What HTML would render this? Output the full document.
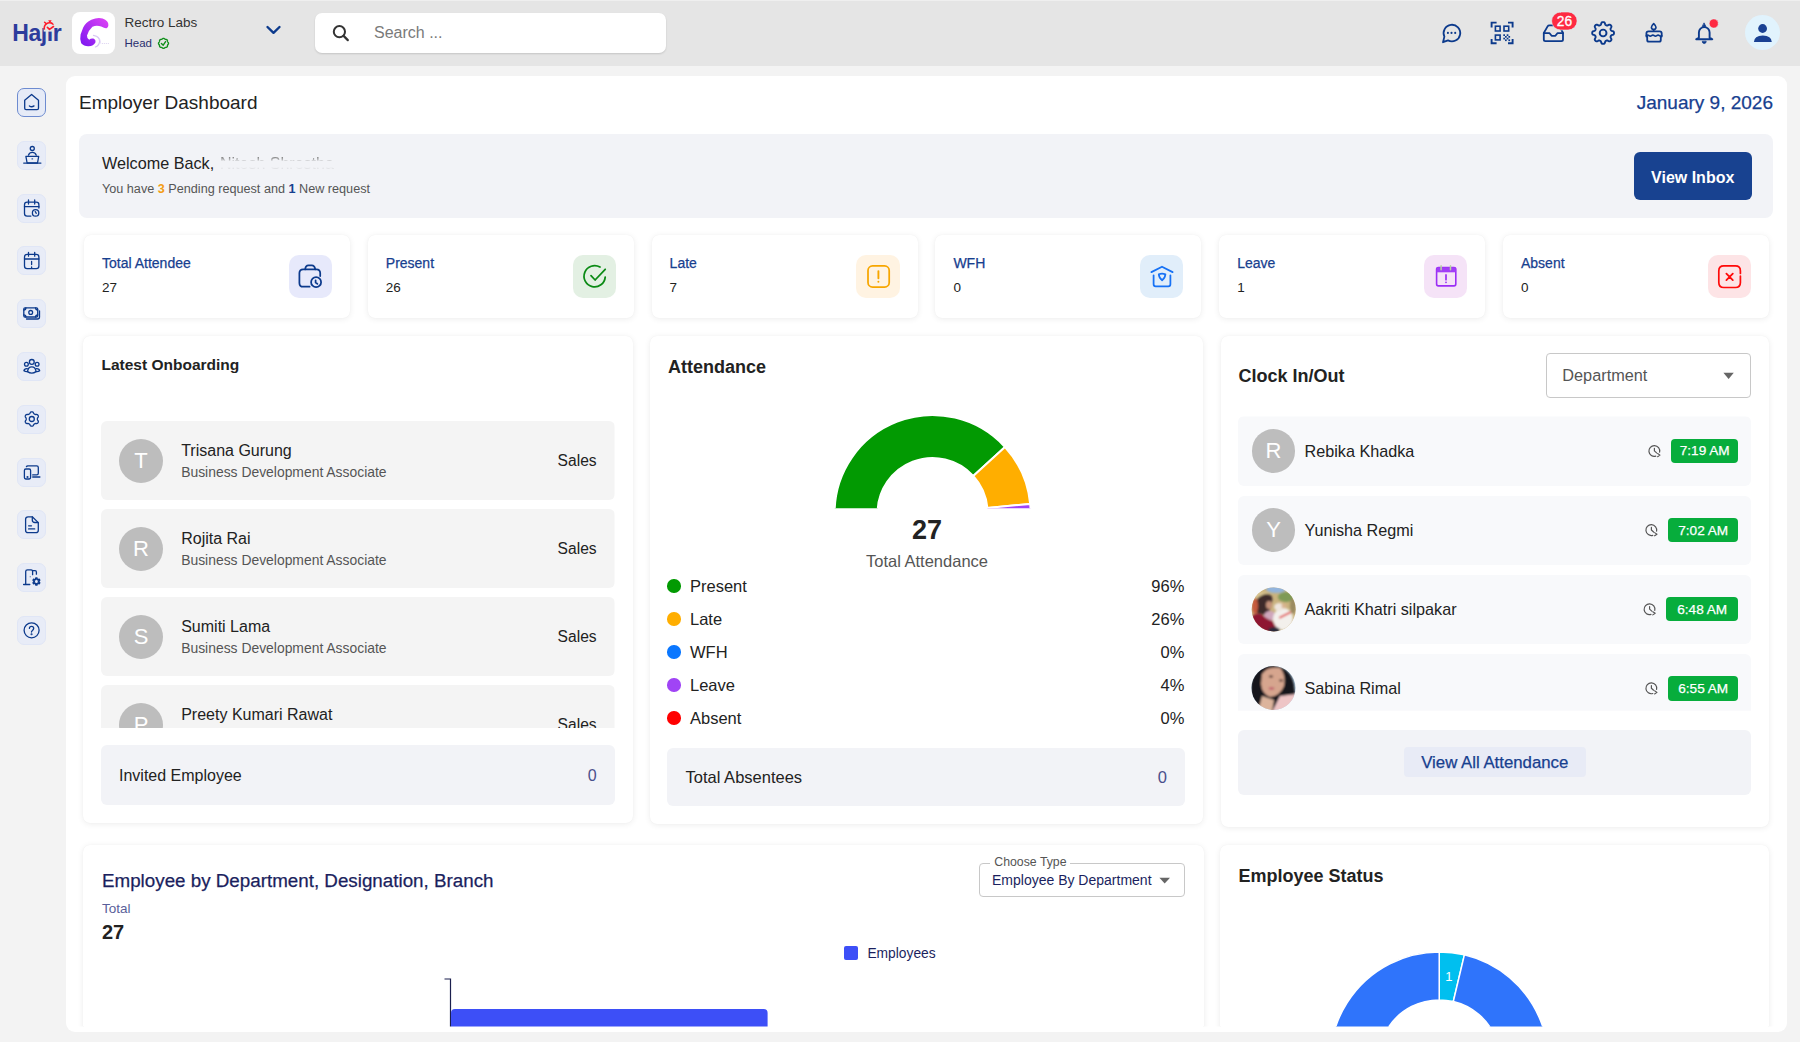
<!DOCTYPE html><html><head><meta charset="utf-8"><style>
*{margin:0;padding:0;box-sizing:border-box}
html,body{width:1800px;height:1042px;overflow:hidden}
body{background:#f3f3f3;font-family:"Liberation Sans",sans-serif;position:relative}
.t{position:absolute;white-space:nowrap}
.b{position:absolute}
svg{position:absolute;overflow:visible}
</style></head><body>
<div class="b" style="left:0px;top:0px;width:1800px;height:66px;background:#e5e5e5;border-radius:0px;"></div>
<div class="b" style="left:0px;top:0px;width:1800px;height:1px;background:#efefef;border-radius:0px;"></div>
<div class="t" style="top:19.83px;font-size:23px;line-height:27.6px;color:#2d3c9c;font-weight:700;left:12.2px;letter-spacing:-0.4px;">Ha&#x237;&#x131;r</div>
<div class="b" style="left:72px;top:12px;width:43px;height:42px;background:#fff;border-radius:8px;"></div>
<div class="t" style="top:15.32px;font-size:13.5px;line-height:16.2px;color:#333;font-weight:400;left:124.5px;">Rectro Labs</div>
<div class="t" style="top:36.71px;font-size:11.5px;line-height:13.8px;color:#2a2f6e;font-weight:400;left:124.5px;">Head</div>
<div class="b" style="left:315px;top:13px;width:351px;height:40px;background:#fff;border-radius:7px;box-shadow:0 1px 2px rgba(0,0,0,0.14);"></div>
<div class="t" style="top:23.45px;font-size:16px;line-height:19.2px;color:#7a7a7a;font-weight:400;left:374px;">Search ...</div>
<div class="b" style="left:1745px;top:15.4px;width:35px;height:35px;border-radius:50%;background:#e1f3fd"></div>
<div class="b" style="left:17.1px;top:88.0px;width:29px;height:29px;background:#e6ebf7;border-radius:7px;border:1px solid #6d8bd0;"></div>
<div class="b" style="left:17.1px;top:140.8px;width:29px;height:29px;background:#e8ecf7;border-radius:7px;border:1px solid #e0e6f6;"></div>
<div class="b" style="left:17.1px;top:193.6px;width:29px;height:29px;background:#e8ecf7;border-radius:7px;border:1px solid #e0e6f6;"></div>
<div class="b" style="left:17.1px;top:246.39999999999998px;width:29px;height:29px;background:#e8ecf7;border-radius:7px;border:1px solid #e0e6f6;"></div>
<div class="b" style="left:17.1px;top:299.2px;width:29px;height:29px;background:#e8ecf7;border-radius:7px;border:1px solid #e0e6f6;"></div>
<div class="b" style="left:17.1px;top:352.0px;width:29px;height:29px;background:#e8ecf7;border-radius:7px;border:1px solid #e0e6f6;"></div>
<div class="b" style="left:17.1px;top:404.79999999999995px;width:29px;height:29px;background:#e8ecf7;border-radius:7px;border:1px solid #e0e6f6;"></div>
<div class="b" style="left:17.1px;top:457.59999999999997px;width:29px;height:29px;background:#e8ecf7;border-radius:7px;border:1px solid #e0e6f6;"></div>
<div class="b" style="left:17.1px;top:510.4px;width:29px;height:29px;background:#e8ecf7;border-radius:7px;border:1px solid #e0e6f6;"></div>
<div class="b" style="left:17.1px;top:563.2px;width:29px;height:29px;background:#e8ecf7;border-radius:7px;border:1px solid #e0e6f6;"></div>
<div class="b" style="left:17.1px;top:616.0px;width:29px;height:29px;background:#e8ecf7;border-radius:7px;border:1px solid #e0e6f6;"></div>
<div class="b" style="left:66px;top:76px;width:1721.3px;height:955.8px;background:#fff;border-radius:9px;"></div>
<div class="t" style="top:91.91px;font-size:19px;line-height:22.8px;color:#222;font-weight:400;left:79px;">Employer Dashboard</div>
<div class="t" style="top:91.91px;font-size:19px;line-height:22.8px;color:#17408f;font-weight:400;right:27.00px;text-align:right;-webkit-text-stroke:0.25px currentColor;">January 9, 2026</div>
<div class="b" style="left:79px;top:134px;width:1694px;height:84px;background:#f2f3f7;border-radius:8px;"></div>
<div class="t" style="top:153.96px;font-size:16.2px;line-height:19.44px;color:#222;font-weight:400;left:102px;">Welcome Back,</div>
<div class="t" style="top:154.15px;font-size:16px;line-height:19.2px;color:#777;font-weight:400;left:220px;-webkit-mask-image:linear-gradient(180deg,rgba(0,0,0,.9) 3px,rgba(0,0,0,.5) 5.5px,transparent 7.5px,transparent 13px,rgba(0,0,0,.12) 14.5px,transparent 16px);filter:blur(0.4px);">Nitesh Shrestha</div>
<div class="t" style="top:182.32px;font-size:12.65px;line-height:15.18px;color:#555;font-weight:400;left:102px;">You have <b style="color:#f39c12">3</b> Pending request and <b style="color:#17408f">1</b> New request</div>
<div class="b" style="left:1633.5px;top:152.3px;width:118.5px;height:48px;background:#184290;border-radius:6px;"></div>
<div class="t" style="top:167.75px;font-size:16px;line-height:19.2px;color:#fff;font-weight:700;left:1633.70px;width:118px;text-align:center;">View Inbox</div>
<div class="b" style="left:84.0px;top:235.3px;width:266px;height:82.5px;background:#fff;border-radius:7px;box-shadow:0 1px 6px rgba(0,0,0,0.075),0 0 1px rgba(0,0,0,0.06);"></div>
<div class="t" style="top:255.35px;font-size:14px;line-height:16.8px;color:#17408f;font-weight:400;left:102.0px;-webkit-text-stroke:0.25px currentColor;">Total Attendee</div>
<div class="t" style="top:279.52px;font-size:13.5px;line-height:16.2px;color:#222;font-weight:400;left:102.0px;">27</div>
<div class="b" style="left:288.8px;top:254.7px;width:43.3px;height:43.3px;background:#e7e9fb;border-radius:10px;"></div>
<div class="b" style="left:367.8px;top:235.3px;width:266px;height:82.5px;background:#fff;border-radius:7px;box-shadow:0 1px 6px rgba(0,0,0,0.075),0 0 1px rgba(0,0,0,0.06);"></div>
<div class="t" style="top:255.35px;font-size:14px;line-height:16.8px;color:#17408f;font-weight:400;left:385.8px;-webkit-text-stroke:0.25px currentColor;">Present</div>
<div class="t" style="top:279.52px;font-size:13.5px;line-height:16.2px;color:#222;font-weight:400;left:385.8px;">26</div>
<div class="b" style="left:572.6px;top:254.7px;width:43.3px;height:43.3px;background:#e3f0e3;border-radius:10px;"></div>
<div class="b" style="left:651.6px;top:235.3px;width:266px;height:82.5px;background:#fff;border-radius:7px;box-shadow:0 1px 6px rgba(0,0,0,0.075),0 0 1px rgba(0,0,0,0.06);"></div>
<div class="t" style="top:255.35px;font-size:14px;line-height:16.8px;color:#17408f;font-weight:400;left:669.6px;-webkit-text-stroke:0.25px currentColor;">Late</div>
<div class="t" style="top:279.52px;font-size:13.5px;line-height:16.2px;color:#222;font-weight:400;left:669.6px;">7</div>
<div class="b" style="left:856.4px;top:254.7px;width:43.3px;height:43.3px;background:#fff3e2;border-radius:10px;"></div>
<div class="b" style="left:935.4px;top:235.3px;width:266px;height:82.5px;background:#fff;border-radius:7px;box-shadow:0 1px 6px rgba(0,0,0,0.075),0 0 1px rgba(0,0,0,0.06);"></div>
<div class="t" style="top:255.35px;font-size:14px;line-height:16.8px;color:#17408f;font-weight:400;left:953.4px;-webkit-text-stroke:0.25px currentColor;">WFH</div>
<div class="t" style="top:279.52px;font-size:13.5px;line-height:16.2px;color:#222;font-weight:400;left:953.4px;">0</div>
<div class="b" style="left:1140.2px;top:254.7px;width:43.3px;height:43.3px;background:#e1eefa;border-radius:10px;"></div>
<div class="b" style="left:1219.2px;top:235.3px;width:266px;height:82.5px;background:#fff;border-radius:7px;box-shadow:0 1px 6px rgba(0,0,0,0.075),0 0 1px rgba(0,0,0,0.06);"></div>
<div class="t" style="top:255.35px;font-size:14px;line-height:16.8px;color:#17408f;font-weight:400;left:1237.2px;-webkit-text-stroke:0.25px currentColor;">Leave</div>
<div class="t" style="top:279.52px;font-size:13.5px;line-height:16.2px;color:#222;font-weight:400;left:1237.2px;">1</div>
<div class="b" style="left:1424.0px;top:254.7px;width:43.3px;height:43.3px;background:#f5e3f7;border-radius:10px;"></div>
<div class="b" style="left:1503.0px;top:235.3px;width:266px;height:82.5px;background:#fff;border-radius:7px;box-shadow:0 1px 6px rgba(0,0,0,0.075),0 0 1px rgba(0,0,0,0.06);"></div>
<div class="t" style="top:255.35px;font-size:14px;line-height:16.8px;color:#17408f;font-weight:400;left:1521.0px;-webkit-text-stroke:0.25px currentColor;">Absent</div>
<div class="t" style="top:279.52px;font-size:13.5px;line-height:16.2px;color:#222;font-weight:400;left:1521.0px;">0</div>
<div class="b" style="left:1707.8px;top:254.7px;width:43.3px;height:43.3px;background:#fde4e6;border-radius:10px;"></div>
<div class="b" style="left:83px;top:335.5px;width:549.5px;height:487px;background:#fff;border-radius:7px;box-shadow:0 1px 6px rgba(0,0,0,0.075),0 0 1px rgba(0,0,0,0.06);"></div>
<div class="b" style="left:650px;top:335.5px;width:553px;height:488.5px;background:#fff;border-radius:7px;box-shadow:0 1px 6px rgba(0,0,0,0.075),0 0 1px rgba(0,0,0,0.06);"></div>
<div class="b" style="left:1221px;top:335.5px;width:548px;height:491.5px;background:#fff;border-radius:7px;box-shadow:0 1px 6px rgba(0,0,0,0.075),0 0 1px rgba(0,0,0,0.06);"></div>
<div class="t" style="top:356.43px;font-size:15.5px;line-height:18.6px;color:#222;font-weight:700;left:101.5px;">Latest Onboarding</div>
<div class="b" style="left:0;top:0;width:1800px;height:1042px;clip-path:inset(421px 1185.5px 314px 101px)">
<div class="b" style="left:101px;top:421px;width:513.5px;height:79px;background:#f4f4f4;border-radius:6px;"></div>
<div class="b" style="left:119px;top:439px;width:44px;height:44px;border-radius:50%;background:#bdbdbd;color:#fff;font-size:22px;line-height:44px;text-align:center">T</div>
<div class="t" style="top:441.25px;font-size:16px;line-height:19.2px;color:#222;font-weight:400;left:181.2px;">Trisana Gurung</div>
<div class="t" style="top:464.24px;font-size:13.9px;line-height:16.68px;color:#555;font-weight:400;left:181.2px;">Business Development Associate</div>
<div class="t" style="top:452.33px;font-size:15.6px;line-height:18.72px;color:#222;font-weight:400;right:1203.40px;text-align:right;">Sales</div>
<div class="b" style="left:101px;top:509px;width:513.5px;height:79px;background:#f4f4f4;border-radius:6px;"></div>
<div class="b" style="left:119px;top:527px;width:44px;height:44px;border-radius:50%;background:#bdbdbd;color:#fff;font-size:22px;line-height:44px;text-align:center">R</div>
<div class="t" style="top:529.25px;font-size:16px;line-height:19.2px;color:#222;font-weight:400;left:181.2px;">Rojita Rai</div>
<div class="t" style="top:552.24px;font-size:13.9px;line-height:16.68px;color:#555;font-weight:400;left:181.2px;">Business Development Associate</div>
<div class="t" style="top:540.33px;font-size:15.6px;line-height:18.72px;color:#222;font-weight:400;right:1203.40px;text-align:right;">Sales</div>
<div class="b" style="left:101px;top:597px;width:513.5px;height:79px;background:#f4f4f4;border-radius:6px;"></div>
<div class="b" style="left:119px;top:615px;width:44px;height:44px;border-radius:50%;background:#bdbdbd;color:#fff;font-size:22px;line-height:44px;text-align:center">S</div>
<div class="t" style="top:617.25px;font-size:16px;line-height:19.2px;color:#222;font-weight:400;left:181.2px;">Sumiti Lama</div>
<div class="t" style="top:640.24px;font-size:13.9px;line-height:16.68px;color:#555;font-weight:400;left:181.2px;">Business Development Associate</div>
<div class="t" style="top:628.33px;font-size:15.6px;line-height:18.72px;color:#222;font-weight:400;right:1203.40px;text-align:right;">Sales</div>
<div class="b" style="left:101px;top:685px;width:513.5px;height:79px;background:#f4f4f4;border-radius:6px;"></div>
<div class="b" style="left:119px;top:703px;width:44px;height:44px;border-radius:50%;background:#bdbdbd;color:#fff;font-size:22px;line-height:44px;text-align:center">P</div>
<div class="t" style="top:705.25px;font-size:16px;line-height:19.2px;color:#222;font-weight:400;left:181.2px;">Preety Kumari Rawat</div>
<div class="t" style="top:728.24px;font-size:13.9px;line-height:16.68px;color:#555;font-weight:400;left:181.2px;">Business Development Associate</div>
<div class="t" style="top:716.33px;font-size:15.6px;line-height:18.72px;color:#222;font-weight:400;right:1203.40px;text-align:right;">Sales</div>
</div>
<div class="b" style="left:101px;top:745.3px;width:513.5px;height:59.5px;background:#f2f3f7;border-radius:6px;"></div>
<div class="t" style="top:766.15px;font-size:16px;line-height:19.2px;color:#222;font-weight:400;left:119px;">Invited Employee</div>
<div class="t" style="top:766.15px;font-size:16px;line-height:19.2px;color:#4a4f8c;font-weight:400;right:1203.40px;text-align:right;">0</div>
<div class="t" style="top:356.56px;font-size:18px;line-height:21.6px;color:#222;font-weight:700;left:668px;">Attendance</div>
<div class="t" style="top:513.79px;font-size:27px;line-height:32.4px;color:#222;font-weight:700;left:877.00px;width:100px;text-align:center;">27</div>
<div class="t" style="top:552.48px;font-size:16.5px;line-height:19.8px;color:#555;font-weight:400;left:827.00px;width:200px;text-align:center;">Total Attendance</div>
<div class="b" style="left:667.2px;top:579.15px;width:13.5px;height:13.5px;border-radius:50%;background:#029a02"></div>
<div class="t" style="top:576.68px;font-size:16.5px;line-height:19.8px;color:#222;font-weight:400;left:690px;">Present</div>
<div class="t" style="top:576.68px;font-size:16.5px;line-height:19.8px;color:#222;font-weight:400;right:615.70px;text-align:right;">96%</div>
<div class="b" style="left:667.2px;top:612.15px;width:13.5px;height:13.5px;border-radius:50%;background:#ffae00"></div>
<div class="t" style="top:609.68px;font-size:16.5px;line-height:19.8px;color:#222;font-weight:400;left:690px;">Late</div>
<div class="t" style="top:609.68px;font-size:16.5px;line-height:19.8px;color:#222;font-weight:400;right:615.70px;text-align:right;">26%</div>
<div class="b" style="left:667.2px;top:645.15px;width:13.5px;height:13.5px;border-radius:50%;background:#0a77ff"></div>
<div class="t" style="top:642.68px;font-size:16.5px;line-height:19.8px;color:#222;font-weight:400;left:690px;">WFH</div>
<div class="t" style="top:642.68px;font-size:16.5px;line-height:19.8px;color:#222;font-weight:400;right:615.70px;text-align:right;">0%</div>
<div class="b" style="left:667.2px;top:678.15px;width:13.5px;height:13.5px;border-radius:50%;background:#a044f5"></div>
<div class="t" style="top:675.68px;font-size:16.5px;line-height:19.8px;color:#222;font-weight:400;left:690px;">Leave</div>
<div class="t" style="top:675.68px;font-size:16.5px;line-height:19.8px;color:#222;font-weight:400;right:615.70px;text-align:right;">4%</div>
<div class="b" style="left:667.2px;top:711.15px;width:13.5px;height:13.5px;border-radius:50%;background:#ff0000"></div>
<div class="t" style="top:708.68px;font-size:16.5px;line-height:19.8px;color:#222;font-weight:400;left:690px;">Absent</div>
<div class="t" style="top:708.68px;font-size:16.5px;line-height:19.8px;color:#222;font-weight:400;right:615.70px;text-align:right;">0%</div>
<div class="b" style="left:667.2px;top:747.8px;width:518px;height:58.4px;background:#f2f3f7;border-radius:6px;"></div>
<div class="t" style="top:767.98px;font-size:16.5px;line-height:19.8px;color:#222;font-weight:400;left:685.6px;">Total Absentees</div>
<div class="t" style="top:767.98px;font-size:16.5px;line-height:19.8px;color:#4a4f8c;font-weight:400;right:633.00px;text-align:right;">0</div>
<div class="t" style="top:365.76px;font-size:18px;line-height:21.6px;color:#222;font-weight:700;left:1238.6px;">Clock In/Out</div>
<div class="b" style="left:1546.3px;top:353px;width:205px;height:44.6px;border:1px solid #c8c8c8;border-radius:4px;background:#fff"></div>
<div class="t" style="top:366.07px;font-size:16.3px;line-height:19.56px;color:#555;font-weight:400;left:1562.3px;">Department</div>
<div class="b" style="left:0;top:0;width:1800px;height:1042px;clip-path:inset(416.4px 49px 331.20000000000005px 1238px)">
<div class="b" style="left:1238px;top:416.4px;width:513px;height:69.3px;background:#f8f9fb;border-radius:6px;"></div>
<div class="b" style="left:1251.7px;top:429.05px;width:43.7px;height:43.7px;border-radius:50%;background:#bdbdbd;color:#fff;font-size:22px;line-height:43.7px;text-align:center">R</div>
<div class="t" style="top:441.86px;font-size:16.2px;line-height:19.44px;color:#222;font-weight:400;left:1304.5px;">Rebika Khadka</div>
<div class="b" style="left:1238px;top:495.5px;width:513px;height:69.3px;background:#f8f9fb;border-radius:6px;"></div>
<div class="b" style="left:1251.7px;top:508.15px;width:43.7px;height:43.7px;border-radius:50%;background:#bdbdbd;color:#fff;font-size:22px;line-height:43.7px;text-align:center">Y</div>
<div class="t" style="top:520.96px;font-size:16.2px;line-height:19.44px;color:#222;font-weight:400;left:1304.5px;">Yunisha Regmi</div>
<div class="b" style="left:1238px;top:574.6px;width:513px;height:69.3px;background:#f8f9fb;border-radius:6px;"></div>
<div class="t" style="top:600.06px;font-size:16.2px;line-height:19.44px;color:#222;font-weight:400;left:1304.5px;">Aakriti Khatri silpakar</div>
<div class="b" style="left:1238px;top:653.7px;width:513px;height:69.3px;background:#f8f9fb;border-radius:6px;"></div>
<div class="t" style="top:679.16px;font-size:16.2px;line-height:19.44px;color:#222;font-weight:400;left:1304.5px;">Sabina Rimal</div>
</div>
<div class="b" style="left:1671px;top:438.5px;width:67.4px;height:24.8px;background:#07ad3c;border-radius:4px;"></div>
<div class="t" style="top:443.42px;font-size:13.6px;line-height:16.32px;color:#fff;font-weight:400;left:1671.00px;width:67.4px;text-align:center;-webkit-text-stroke:0.25px currentColor;">7:19 AM</div>
<div class="b" style="left:1668px;top:517.6px;width:70.4px;height:24.8px;background:#07ad3c;border-radius:4px;"></div>
<div class="t" style="top:522.52px;font-size:13.6px;line-height:16.32px;color:#fff;font-weight:400;left:1668.00px;width:70.4px;text-align:center;-webkit-text-stroke:0.25px currentColor;">7:02 AM</div>
<div class="b" style="left:1666px;top:596.7px;width:72.4px;height:24.8px;background:#07ad3c;border-radius:4px;"></div>
<div class="t" style="top:601.62px;font-size:13.6px;line-height:16.32px;color:#fff;font-weight:400;left:1666.00px;width:72.4px;text-align:center;-webkit-text-stroke:0.25px currentColor;">6:48 AM</div>
<div class="b" style="left:1668px;top:675.8px;width:70.4px;height:24.8px;background:#07ad3c;border-radius:4px;"></div>
<div class="t" style="top:680.72px;font-size:13.6px;line-height:16.32px;color:#fff;font-weight:400;left:1668.00px;width:70.4px;text-align:center;-webkit-text-stroke:0.25px currentColor;">6:55 AM</div>
<div class="b" style="left:1238.3px;top:729.7px;width:513px;height:65.6px;background:#f2f3f7;border-radius:6px;"></div>
<div class="b" style="left:1403.6px;top:747px;width:182.4px;height:30.2px;background:#e8ebf6;border-radius:4px;"></div>
<div class="t" style="top:752.50px;font-size:16.8px;line-height:20.16px;color:#17408f;font-weight:400;left:1403.80px;width:182px;text-align:center;-webkit-text-stroke:0.25px currentColor;">View All Attendance</div>
<div class="b" style="left:0;top:0;width:1800px;height:1042px;clip-path:inset(836px 14px 15.5px 66px)">
<div class="b" style="left:83px;top:845px;width:1120.5px;height:300px;background:#fff;border-radius:7px;box-shadow:0 1px 6px rgba(0,0,0,0.075),0 0 1px rgba(0,0,0,0.06);"></div>
<div class="b" style="left:1220px;top:845px;width:549px;height:300px;background:#fff;border-radius:7px;box-shadow:0 1px 6px rgba(0,0,0,0.075),0 0 1px rgba(0,0,0,0.06);"></div>
</div>
<div class="t" style="top:869.80px;font-size:18.8px;line-height:22.56px;color:#1b1f5e;font-weight:400;left:102px;-webkit-text-stroke:0.25px currentColor;">Employee by Department, Designation, Branch</div>
<div class="t" style="top:901.07px;font-size:13.5px;line-height:16.2px;color:#5a5f9a;font-weight:400;left:102px;">Total</div>
<div class="t" style="top:920.42px;font-size:20px;line-height:24.0px;color:#222;font-weight:700;left:102px;">27</div>
<div class="b" style="left:979.3px;top:862.8px;width:205.7px;height:34.6px;border:1px solid #c8c8c8;border-radius:4px;background:#fff"></div>
<div class="b" style="left:990px;top:858px;width:80px;height:6px;background:#fff;border-radius:0px;"></div>
<div class="t" style="top:854.96px;font-size:12.3px;line-height:14.76px;color:#555;font-weight:400;left:994.3px;">Choose Type</div>
<div class="t" style="top:872.35px;font-size:14px;line-height:16.8px;color:#1b1f5e;font-weight:400;left:992px;">Employee By Department</div>
<div class="b" style="left:843.9px;top:946px;width:14.3px;height:14px;background:#3d4ff7;border-radius:2px;"></div>
<div class="t" style="top:946.34px;font-size:13.8px;line-height:16.56px;color:#1b1f5e;font-weight:400;left:867.4px;">Employees</div>
<div class="t" style="top:866.46px;font-size:18px;line-height:21.6px;color:#222;font-weight:700;left:1238.4px;">Employee Status</div>
<svg class="b" style="left:0;top:0" width="1800" height="1042" viewBox="0 0 1800 1042" fill="none" stroke-linecap="round" stroke-linejoin="round">
<circle cx="339.4" cy="31.7" r="5.6" stroke="#333" stroke-width="2"/>
<path d="M343.6 35.9 L347.8 40.1" stroke="#333" stroke-width="2.2"/>
<path d="M267.5 27 L273.5 32.8 L279.5 27" stroke="#0c3a8c" stroke-width="2.4"/>
<path d="M1444.4 36.6 A8.3 8.3 0 1 1 1448.0 40.4 L1443.0 42.2 Z" stroke="#0c3a8c" stroke-width="1.8"/>
<circle cx="1447.9" cy="32.9" r="1.05" fill="#0c3a8c"/>
<circle cx="1451.5" cy="32.9" r="1.05" fill="#0c3a8c"/>
<circle cx="1455.2" cy="32.9" r="1.05" fill="#0c3a8c"/>
<path d="M1491.6 27.4 V22.6 H1496.6 M1508 22.6 H1512.6 V27.4 M1491.6 39 V43.2 H1496.6 M1508 43.2 H1512.6 V39" stroke="#0c3a8c" stroke-width="1.9" stroke-linecap="butt" stroke-linejoin="miter"/>
<rect x="1495.4" y="26.2" width="4.7" height="4.8" stroke="#0c3a8c" stroke-width="1.6" stroke-linejoin="miter"/>
<rect x="1504" y="26.2" width="4.7" height="4.8" stroke="#0c3a8c" stroke-width="1.6" stroke-linejoin="miter"/>
<rect x="1495.4" y="35.1" width="4.7" height="4.8" stroke="#0c3a8c" stroke-width="1.6" stroke-linejoin="miter"/>
<rect x="1503.3" y="34.3" width="1.7" height="1.7" fill="#0c3a8c"/>
<rect x="1506.7" y="34.3" width="1.7" height="1.7" fill="#0c3a8c"/>
<rect x="1505" y="36" width="1.7" height="1.7" fill="#0c3a8c"/>
<rect x="1508.4" y="36" width="1.7" height="1.7" fill="#0c3a8c"/>
<rect x="1503.3" y="37.7" width="1.7" height="1.7" fill="#0c3a8c"/>
<rect x="1506.7" y="37.7" width="1.7" height="1.7" fill="#0c3a8c"/>
<rect x="1505" y="39.4" width="1.7" height="1.7" fill="#0c3a8c"/>
<rect x="1508.4" y="39.4" width="1.7" height="1.7" fill="#0c3a8c"/>
<path d="M1543.8 33 L1547.6 26.4 Q1548.2 25.4 1549.4 25.4 H1558 Q1559.2 25.4 1559.8 26.4 L1563 33 V39.6 Q1563 41.2 1561.4 41.2 H1545.4 Q1543.8 41.2 1543.8 39.6 Z" stroke="#0c3a8c" stroke-width="1.8"/>
<path d="M1543.8 33.2 H1549.6 L1551.6 35.8 H1555.4 L1557.4 33.2 H1563" stroke="#0c3a8c" stroke-width="1.8"/>
<rect x="1551.6" y="12" width="25.5" height="18" rx="9" fill="#fe2a42" stroke="#dff6f8" stroke-width="0.6"/>
<text x="1564.4" y="25.8" font-size="13.8" fill="#fff" stroke="#fff" stroke-width="0.3" text-anchor="middle" font-family="Liberation Sans">26</text>
<path d="M1614.00 33.00 L1613.99 33.29 L1613.95 33.57 L1613.88 33.85 L1613.76 34.12 L1613.55 34.38 L1613.22 34.60 L1612.77 34.79 L1612.26 34.95 L1611.81 35.09 L1611.47 35.24 L1611.24 35.41 L1611.08 35.59 L1610.96 35.78 L1610.86 35.98 L1610.77 36.18 L1610.69 36.38 L1610.62 36.59 L1610.57 36.81 L1610.56 37.05 L1610.60 37.33 L1610.73 37.68 L1610.96 38.10 L1611.20 38.57 L1611.39 39.02 L1611.46 39.41 L1611.43 39.74 L1611.32 40.02 L1611.18 40.27 L1611.00 40.50 L1610.81 40.71 L1610.60 40.90 L1610.37 41.08 L1610.12 41.22 L1609.84 41.33 L1609.51 41.36 L1609.12 41.29 L1608.67 41.10 L1608.20 40.86 L1607.78 40.63 L1607.43 40.50 L1607.15 40.46 L1606.91 40.47 L1606.69 40.52 L1606.48 40.59 L1606.28 40.67 L1606.08 40.76 L1605.88 40.86 L1605.69 40.98 L1605.51 41.14 L1605.34 41.37 L1605.19 41.71 L1605.05 42.16 L1604.89 42.67 L1604.70 43.12 L1604.48 43.45 L1604.22 43.66 L1603.95 43.78 L1603.67 43.85 L1603.39 43.89 L1603.10 43.90 L1602.81 43.89 L1602.53 43.85 L1602.25 43.78 L1601.98 43.66 L1601.72 43.45 L1601.50 43.12 L1601.31 42.67 L1601.15 42.16 L1601.01 41.71 L1600.86 41.37 L1600.69 41.14 L1600.51 40.98 L1600.32 40.86 L1600.12 40.76 L1599.92 40.67 L1599.72 40.59 L1599.51 40.52 L1599.29 40.47 L1599.05 40.46 L1598.77 40.50 L1598.42 40.63 L1598.00 40.86 L1597.53 41.10 L1597.08 41.29 L1596.69 41.36 L1596.36 41.33 L1596.08 41.22 L1595.83 41.08 L1595.60 40.90 L1595.39 40.71 L1595.20 40.50 L1595.02 40.27 L1594.88 40.02 L1594.77 39.74 L1594.74 39.41 L1594.81 39.02 L1595.00 38.57 L1595.24 38.10 L1595.47 37.68 L1595.60 37.33 L1595.64 37.05 L1595.63 36.81 L1595.58 36.59 L1595.51 36.38 L1595.43 36.18 L1595.34 35.98 L1595.24 35.78 L1595.12 35.59 L1594.96 35.41 L1594.73 35.24 L1594.39 35.09 L1593.94 34.95 L1593.43 34.79 L1592.98 34.60 L1592.65 34.38 L1592.44 34.12 L1592.32 33.85 L1592.25 33.57 L1592.21 33.29 L1592.20 33.00 L1592.21 32.71 L1592.25 32.43 L1592.32 32.15 L1592.44 31.88 L1592.65 31.62 L1592.98 31.40 L1593.43 31.21 L1593.94 31.05 L1594.39 30.91 L1594.73 30.76 L1594.96 30.59 L1595.12 30.41 L1595.24 30.22 L1595.34 30.02 L1595.43 29.82 L1595.51 29.62 L1595.58 29.41 L1595.63 29.19 L1595.64 28.95 L1595.60 28.67 L1595.47 28.32 L1595.24 27.90 L1595.00 27.43 L1594.81 26.98 L1594.74 26.59 L1594.77 26.26 L1594.88 25.98 L1595.02 25.73 L1595.20 25.50 L1595.39 25.29 L1595.60 25.10 L1595.83 24.92 L1596.08 24.78 L1596.36 24.67 L1596.69 24.64 L1597.08 24.71 L1597.53 24.90 L1598.00 25.14 L1598.42 25.37 L1598.77 25.50 L1599.05 25.54 L1599.29 25.53 L1599.51 25.48 L1599.72 25.41 L1599.92 25.33 L1600.12 25.24 L1600.32 25.14 L1600.51 25.02 L1600.69 24.86 L1600.86 24.63 L1601.01 24.29 L1601.15 23.84 L1601.31 23.33 L1601.50 22.88 L1601.72 22.55 L1601.98 22.34 L1602.25 22.22 L1602.53 22.15 L1602.81 22.11 L1603.10 22.10 L1603.39 22.11 L1603.67 22.15 L1603.95 22.22 L1604.22 22.34 L1604.48 22.55 L1604.70 22.88 L1604.89 23.33 L1605.05 23.84 L1605.19 24.29 L1605.34 24.63 L1605.51 24.86 L1605.69 25.02 L1605.88 25.14 L1606.08 25.24 L1606.28 25.33 L1606.48 25.41 L1606.69 25.48 L1606.91 25.53 L1607.15 25.54 L1607.43 25.50 L1607.78 25.37 L1608.20 25.14 L1608.67 24.90 L1609.12 24.71 L1609.51 24.64 L1609.84 24.67 L1610.12 24.78 L1610.37 24.92 L1610.60 25.10 L1610.81 25.29 L1611.00 25.50 L1611.18 25.73 L1611.32 25.98 L1611.43 26.26 L1611.46 26.59 L1611.39 26.98 L1611.20 27.43 L1610.96 27.90 L1610.73 28.32 L1610.60 28.67 L1610.56 28.95 L1610.57 29.19 L1610.62 29.41 L1610.69 29.62 L1610.77 29.82 L1610.86 30.02 L1610.96 30.22 L1611.08 30.41 L1611.24 30.59 L1611.47 30.76 L1611.81 30.91 L1612.26 31.05 L1612.77 31.21 L1613.22 31.40 L1613.55 31.62 L1613.76 31.88 L1613.88 32.15 L1613.95 32.43 L1613.99 32.71 Z" stroke="#0c3a8c" stroke-width="1.9"/>
<circle cx="1603.1" cy="33" r="3.4" stroke="#0c3a8c" stroke-width="1.9"/>
<path d="M1646.4 36.6 V33.4 Q1646.4 31.3 1648.5 31.3 H1659.6 Q1661.7 31.3 1661.7 33.4 V36.6" stroke="#0c3a8c" stroke-width="1.8"/>
<path d="M1647.2 36.6 V40 Q1647.2 41.7 1648.9 41.7 H1659.1 Q1660.8 41.7 1660.8 40 V36.6" stroke="#0c3a8c" stroke-width="1.8"/>
<path d="M1646.4 35.6 q1.3 -1.1 2.6 0 t2.6 0 t2.6 0 t2.6 0 t2.6 0 t2.3 0" stroke="#0c3a8c" stroke-width="1.6"/>
<path d="M1653.7 23.6 Q1656 26 1656 27.2 A2.3 2.3 0 0 1 1651.4 27.2 Q1651.4 26 1653.7 23.6 Z" stroke="#0c3a8c" stroke-width="1.6"/>
<path d="M1653.7 29.6 V31" stroke="#0c3a8c" stroke-width="1.6"/>
<path d="M1704.2 23.2 L1705.9 26.6 H1702.5 Z" fill="#0c3a8c" stroke="#0c3a8c" stroke-width="0.8"/>
<path d="M1698.9 37.6 V32.4 A5.35 5.35 0 0 1 1709.6 32.4 V37.6 L1712.3 39.3 H1696.2 Z" stroke="#0c3a8c" stroke-width="1.9"/>
<path d="M1702.3 41.6 A1.95 1.95 0 0 0 1706.2 41.6 Z" fill="#0c3a8c" stroke="#0c3a8c" stroke-width="0.8"/>
<circle cx="1713.8" cy="23.5" r="4.6" fill="#fe2a42" stroke="#dff6f8" stroke-width="0.5"/>
<circle cx="1762.6" cy="28.5" r="4.4" fill="#1a4193"/>
<path d="M1753.9 42 Q1754.2 35.4 1762.8 35.4 Q1771.5 35.4 1771.8 42 Z" fill="#1a4193"/>
<rect x="43.7" y="25" width="10.3" height="6.6" fill="#e5e5e5"/>
<path d="M44.5 29.6 A5.3 5.3 0 0 1 52.3 23.6" stroke="#ff1a2a" stroke-width="1.5" stroke-linecap="butt"/>
<path d="M47.4 27.3 L49.5 29.3 L53.5 26.5" stroke="#ff1a2a" stroke-width="1.6"/>
<path d="M48.2 20.2 H51.6 L50.2 22.8 H49.6 Z" fill="#ff1a2a"/>
<path d="M44.6 22.2 L46.2 23.6 M51.6 23 L53 24.2" stroke="#ff1a2a" stroke-width="1.5"/>
<defs><linearGradient id="cg" x1="0" y1="1" x2="1" y2="0"><stop offset="0" stop-color="#7a16f0"/><stop offset="1" stop-color="#e044f5"/></linearGradient></defs>
<path d="M108.4 25.2 Q108.6 20.6 102.6 18.6 Q97.6 17.2 91.4 19.8 Q85.6 22.4 83.2 27.6 L80.6 34.4 Q79.6 39.4 81.2 43.2 Q84 46.4 88.6 46.2 Q93.6 45.8 95.4 42.4 Q96 39.8 93.4 38.6 Q90.8 38.2 89.2 39.8 Q86.8 38.4 87 35.4 Q88.6 30.4 92.4 26.8 Q96.6 24.8 101.2 26.6 Q105 28.6 106.6 28.2 Q108.4 27.4 108.4 25.2 Z" fill="url(#cg)"/>
<path d="M93.5 35.4 Q99.8 36.6 99.6 41.6 Q99 45.6 95.4 47" stroke="#cdb6f0" stroke-width="1.2" opacity="0.8"/>
<path d="M96.4 36.2 Q101.2 38.6 100.4 43.2" stroke="#ddd0f6" stroke-width="1" opacity="0.7"/>
<circle cx="102.2" cy="43.5" r="0.45" fill="#b9a3e3"/>
<circle cx="104.2" cy="43.5" r="0.45" fill="#b9a3e3"/>
<circle cx="106.2" cy="43.5" r="0.45" fill="#b9a3e3"/>
<circle cx="108.2" cy="43.5" r="0.45" fill="#b9a3e3"/>
<path d="M168.50 43.40 L168.50 43.53 L168.48 43.66 L168.45 43.79 L168.41 43.92 L168.36 44.04 L168.29 44.16 L168.20 44.27 L168.11 44.38 L168.02 44.49 L167.94 44.59 L167.87 44.69 L167.81 44.80 L167.75 44.91 L167.70 45.01 L167.66 45.12 L167.61 45.23 L167.57 45.34 L167.54 45.46 L167.51 45.57 L167.48 45.70 L167.47 45.83 L167.46 45.97 L167.44 46.11 L167.42 46.25 L167.39 46.38 L167.34 46.51 L167.28 46.63 L167.21 46.74 L167.12 46.84 L167.04 46.94 L166.94 47.02 L166.84 47.11 L166.73 47.18 L166.61 47.24 L166.48 47.29 L166.35 47.32 L166.21 47.34 L166.07 47.36 L165.93 47.37 L165.80 47.38 L165.67 47.41 L165.56 47.44 L165.44 47.47 L165.33 47.51 L165.22 47.56 L165.11 47.60 L165.01 47.65 L164.90 47.71 L164.79 47.77 L164.69 47.84 L164.59 47.92 L164.48 48.01 L164.37 48.10 L164.26 48.19 L164.14 48.26 L164.02 48.31 L163.89 48.35 L163.76 48.38 L163.63 48.40 L163.50 48.40 L163.37 48.40 L163.24 48.38 L163.11 48.35 L162.98 48.31 L162.86 48.26 L162.74 48.19 L162.63 48.10 L162.52 48.01 L162.41 47.92 L162.31 47.84 L162.21 47.77 L162.10 47.71 L161.99 47.65 L161.89 47.60 L161.78 47.56 L161.67 47.51 L161.56 47.47 L161.44 47.44 L161.33 47.41 L161.20 47.38 L161.07 47.37 L160.93 47.36 L160.79 47.34 L160.65 47.32 L160.52 47.29 L160.39 47.24 L160.27 47.18 L160.16 47.11 L160.06 47.02 L159.96 46.94 L159.88 46.84 L159.79 46.74 L159.72 46.63 L159.66 46.51 L159.61 46.38 L159.58 46.25 L159.56 46.11 L159.54 45.97 L159.53 45.83 L159.52 45.70 L159.49 45.57 L159.46 45.46 L159.43 45.34 L159.39 45.23 L159.34 45.12 L159.30 45.01 L159.25 44.91 L159.19 44.80 L159.13 44.69 L159.06 44.59 L158.98 44.49 L158.89 44.38 L158.80 44.27 L158.71 44.16 L158.64 44.04 L158.59 43.92 L158.55 43.79 L158.52 43.66 L158.50 43.53 L158.50 43.40 L158.50 43.27 L158.52 43.14 L158.55 43.01 L158.59 42.88 L158.64 42.76 L158.71 42.64 L158.80 42.53 L158.89 42.42 L158.98 42.31 L159.06 42.21 L159.13 42.11 L159.19 42.00 L159.25 41.89 L159.30 41.79 L159.34 41.68 L159.39 41.57 L159.43 41.46 L159.46 41.34 L159.49 41.23 L159.52 41.10 L159.53 40.97 L159.54 40.83 L159.56 40.69 L159.58 40.55 L159.61 40.42 L159.66 40.29 L159.72 40.17 L159.79 40.06 L159.88 39.96 L159.96 39.86 L160.06 39.78 L160.16 39.69 L160.27 39.62 L160.39 39.56 L160.52 39.51 L160.65 39.48 L160.79 39.46 L160.93 39.44 L161.07 39.43 L161.20 39.42 L161.33 39.39 L161.44 39.36 L161.56 39.33 L161.67 39.29 L161.78 39.24 L161.89 39.20 L161.99 39.15 L162.10 39.09 L162.21 39.03 L162.31 38.96 L162.41 38.88 L162.52 38.79 L162.63 38.70 L162.74 38.61 L162.86 38.54 L162.98 38.49 L163.11 38.45 L163.24 38.42 L163.37 38.40 L163.50 38.40 L163.63 38.40 L163.76 38.42 L163.89 38.45 L164.02 38.49 L164.14 38.54 L164.26 38.61 L164.37 38.70 L164.48 38.79 L164.59 38.88 L164.69 38.96 L164.79 39.03 L164.90 39.09 L165.01 39.15 L165.11 39.20 L165.22 39.24 L165.33 39.29 L165.44 39.33 L165.56 39.36 L165.67 39.39 L165.80 39.42 L165.93 39.43 L166.07 39.44 L166.21 39.46 L166.35 39.48 L166.48 39.51 L166.61 39.56 L166.73 39.62 L166.84 39.69 L166.94 39.78 L167.04 39.86 L167.12 39.96 L167.21 40.06 L167.28 40.17 L167.34 40.29 L167.39 40.42 L167.42 40.55 L167.44 40.69 L167.46 40.83 L167.47 40.97 L167.48 41.10 L167.51 41.23 L167.54 41.34 L167.57 41.46 L167.61 41.57 L167.66 41.68 L167.70 41.79 L167.75 41.89 L167.81 42.00 L167.87 42.11 L167.94 42.21 L168.02 42.31 L168.11 42.42 L168.20 42.53 L168.29 42.64 L168.36 42.76 L168.41 42.88 L168.45 43.01 L168.48 43.14 L168.50 43.27 Z" stroke="#11901c" stroke-width="1.35"/>
<path d="M161.4 43.5 L163.2 45.2 L165.6 41.6" stroke="#11901c" stroke-width="1.4"/>
<g transform="translate(17.10,88.00)" ><path d="M7.6 12.2 L14.5 6.4 L21.4 12.2 V20.2 Q21.4 21.6 20 21.6 H9 Q7.6 21.6 7.6 20.2 Z" stroke="#0c3a8c" stroke-width="1.3"/><path d="M12.3 17.9 Q14.5 19.6 16.9 17.9" stroke="#0c3a8c" stroke-width="1.3"/></g>
<g transform="translate(17.10,140.80)" ><circle cx="15.2" cy="7.7" r="2" stroke="#0c3a8c" stroke-width="1.3"/><path d="M11.3 14.4 Q12.4 11.6 15.2 11.6 Q18 11.6 19.2 14.4" stroke="#0c3a8c" stroke-width="1.3"/><path d="M8.8 15.6 H21.6 L20.4 22.2 H10 Z" stroke="#0c3a8c" stroke-width="1.3"/><path d="M6.6 22.3 H23.8" stroke="#0c3a8c" stroke-width="1.3"/><rect x="14.4" y="17.6" width="1.6" height="1" fill="#0c3a8c"/></g>
<g transform="translate(17.10,193.60)" ><path d="M13.8 22.5 H10 Q7.4 22.5 7.4 19.9 V11.1 Q7.4 8.5 10 8.5 H19.2 Q21.8 8.5 21.8 11.1 V14.5" stroke="#0c3a8c" stroke-width="1.3"/><path d="M7.4 13.1 H21.8 M11.4 6.4 V10.4 M17.6 6.4 V10.4" stroke="#0c3a8c" stroke-width="1.3"/><circle cx="18.5" cy="19.3" r="3.2" stroke="#0c3a8c" stroke-width="1.3"/><path d="M18.1 17.9 L19.2 19.7" stroke="#0c3a8c" stroke-width="1.3"/></g>
<g transform="translate(17.10,246.40)" ><rect x="7.4" y="8" width="14.4" height="14.2" rx="2.6" stroke="#0c3a8c" stroke-width="1.3"/><path d="M7.4 12.6 H21.8 M11.4 5.9 V9.8 M17.6 5.9 V9.8 M14.5 15 V18.1 M14.5 20.6 V22" stroke="#0c3a8c" stroke-width="1.3"/></g>
<g transform="translate(17.10,299.20)" ><rect x="6.7" y="8.6" width="13.9" height="9.2" rx="1.2" stroke="#0c3a8c" stroke-width="1.3"/><circle cx="13.6" cy="13.2" r="1.9" stroke="#0c3a8c" stroke-width="1.3"/><path d="M6.7 10.8 Q8.8 10.8 8.8 8.6 M18.5 8.6 Q18.5 10.8 20.6 10.8 M6.7 15.6 Q8.8 15.6 8.8 17.8 M18.5 17.8 Q18.5 15.6 20.6 15.6 M22.4 11.6 V17.8 Q22.4 19.8 20.4 19.8 H9.4" stroke="#0c3a8c" stroke-width="1.3"/></g>
<g transform="translate(17.10,352.00)" ><circle cx="14.7" cy="9.9" r="2.4" stroke="#0c3a8c" stroke-width="1.3"/><circle cx="9.3" cy="12.3" r="1.9" stroke="#0c3a8c" stroke-width="1.3"/><circle cx="20" cy="12.3" r="1.9" stroke="#0c3a8c" stroke-width="1.3"/><path d="M10.4 19.6 Q11 14.8 14.7 14.8 Q18.4 14.8 19 19.6 Q14.7 22.6 10.4 19.6 Z" stroke="#0c3a8c" stroke-width="1.3"/><path d="M10.2 16.6 Q7.2 16.4 6.8 18.8 Q8.2 19.8 10.4 19.6 M19.2 16.6 Q22.2 16.4 22.6 18.8 Q21.2 19.8 19 19.6" stroke="#0c3a8c" stroke-width="1.3"/></g>
<g transform="translate(17.10,404.80)" ><path d="M20.30 14.20 L20.30 14.35 L20.31 14.49 L20.32 14.64 L20.34 14.79 L20.38 14.95 L20.43 15.11 L20.51 15.28 L20.61 15.46 L20.74 15.65 L20.88 15.86 L21.02 16.07 L21.12 16.29 L21.20 16.50 L21.23 16.71 L21.24 16.91 L21.21 17.10 L21.16 17.28 L21.10 17.46 L21.02 17.63 L20.94 17.80 L20.84 17.96 L20.72 18.11 L20.60 18.26 L20.47 18.39 L20.31 18.51 L20.14 18.60 L19.94 18.68 L19.72 18.72 L19.48 18.73 L19.23 18.73 L18.98 18.71 L18.75 18.69 L18.54 18.69 L18.35 18.71 L18.19 18.74 L18.03 18.79 L17.89 18.85 L17.76 18.91 L17.63 18.98 L17.50 19.05 L17.37 19.12 L17.25 19.20 L17.13 19.29 L17.01 19.38 L16.89 19.49 L16.78 19.62 L16.67 19.77 L16.57 19.95 L16.46 20.16 L16.36 20.38 L16.24 20.60 L16.10 20.81 L15.96 20.98 L15.79 21.11 L15.62 21.21 L15.44 21.29 L15.26 21.34 L15.08 21.37 L14.89 21.39 L14.70 21.40 L14.51 21.39 L14.32 21.37 L14.14 21.34 L13.96 21.29 L13.78 21.21 L13.61 21.11 L13.44 20.98 L13.30 20.81 L13.16 20.60 L13.04 20.38 L12.94 20.16 L12.83 19.95 L12.73 19.77 L12.62 19.62 L12.51 19.49 L12.39 19.38 L12.27 19.29 L12.15 19.20 L12.03 19.12 L11.90 19.05 L11.77 18.98 L11.64 18.91 L11.51 18.85 L11.37 18.79 L11.21 18.74 L11.05 18.71 L10.86 18.69 L10.65 18.69 L10.42 18.71 L10.17 18.73 L9.92 18.73 L9.68 18.72 L9.46 18.68 L9.26 18.60 L9.09 18.51 L8.93 18.39 L8.80 18.26 L8.68 18.11 L8.56 17.96 L8.46 17.80 L8.38 17.63 L8.30 17.46 L8.24 17.28 L8.19 17.10 L8.16 16.91 L8.17 16.71 L8.20 16.50 L8.28 16.29 L8.38 16.07 L8.52 15.86 L8.66 15.65 L8.79 15.46 L8.89 15.28 L8.97 15.11 L9.02 14.95 L9.06 14.79 L9.08 14.64 L9.09 14.49 L9.10 14.35 L9.10 14.20 L9.10 14.05 L9.09 13.91 L9.08 13.76 L9.06 13.61 L9.02 13.45 L8.97 13.29 L8.89 13.12 L8.79 12.94 L8.66 12.75 L8.52 12.54 L8.38 12.33 L8.28 12.11 L8.20 11.90 L8.17 11.69 L8.16 11.49 L8.19 11.30 L8.24 11.12 L8.30 10.94 L8.38 10.77 L8.46 10.60 L8.56 10.44 L8.68 10.29 L8.80 10.14 L8.93 10.01 L9.09 9.89 L9.26 9.80 L9.46 9.72 L9.68 9.68 L9.92 9.67 L10.17 9.67 L10.42 9.69 L10.65 9.71 L10.86 9.71 L11.05 9.69 L11.21 9.66 L11.37 9.61 L11.51 9.55 L11.64 9.49 L11.77 9.42 L11.90 9.35 L12.03 9.28 L12.15 9.20 L12.27 9.11 L12.39 9.02 L12.51 8.91 L12.62 8.78 L12.73 8.63 L12.83 8.45 L12.94 8.24 L13.04 8.02 L13.16 7.80 L13.30 7.59 L13.44 7.42 L13.61 7.29 L13.78 7.19 L13.96 7.11 L14.14 7.06 L14.32 7.03 L14.51 7.01 L14.70 7.00 L14.89 7.01 L15.08 7.03 L15.26 7.06 L15.44 7.11 L15.62 7.19 L15.79 7.29 L15.96 7.42 L16.10 7.59 L16.24 7.80 L16.36 8.02 L16.46 8.24 L16.57 8.45 L16.67 8.63 L16.78 8.78 L16.89 8.91 L17.01 9.02 L17.13 9.11 L17.25 9.20 L17.37 9.28 L17.50 9.35 L17.63 9.42 L17.76 9.49 L17.89 9.55 L18.03 9.61 L18.19 9.66 L18.35 9.69 L18.54 9.71 L18.75 9.71 L18.98 9.69 L19.23 9.67 L19.48 9.67 L19.72 9.68 L19.94 9.72 L20.14 9.80 L20.31 9.89 L20.47 10.01 L20.60 10.14 L20.72 10.29 L20.84 10.44 L20.94 10.60 L21.02 10.77 L21.10 10.94 L21.16 11.12 L21.21 11.30 L21.24 11.49 L21.23 11.69 L21.20 11.90 L21.12 12.11 L21.02 12.33 L20.88 12.54 L20.74 12.75 L20.61 12.94 L20.51 13.12 L20.43 13.29 L20.38 13.45 L20.34 13.61 L20.32 13.76 L20.31 13.91 L20.30 14.05 Z" stroke="#0c3a8c" stroke-width="1.3"/><circle cx="14.7" cy="14.2" r="2.5" stroke="#0c3a8c" stroke-width="1.3"/></g>
<g transform="translate(17.10,457.60)" ><rect x="7.3" y="11.4" width="6.2" height="10" rx="1.4" stroke="#0c3a8c" stroke-width="1.3"/><circle cx="10.4" cy="19.4" r="0.45" fill="#0c3a8c" stroke="#0c3a8c" stroke-width="1.3"/><path d="M9.3 9.1 Q9.6 8.3 10.8 8.3 H19.6 Q21.2 8.3 21.2 9.9 V15.7 Q21.2 17.3 19.6 17.3 H15.6 M15.6 19.4 H22.8" stroke="#0c3a8c" stroke-width="1.3"/></g>
<g transform="translate(17.10,510.40)" ><path d="M15.2 6.4 H11 Q8.5 6.4 8.5 8.9 V19.8 Q8.5 22.3 11 22.3 H18.7 Q21.2 22.3 21.2 19.8 V12.2 Z" stroke="#0c3a8c" stroke-width="1.3"/><path d="M15.2 6.6 V9.6 Q15.2 12.1 17.8 12.1 H21" stroke="#0c3a8c" stroke-width="1.3"/><path d="M11.5 15.4 H14.4 M11.5 18.5 H17.6" stroke="#0c3a8c" stroke-width="1.3"/></g>
<g transform="translate(17.10,563.20)" ><path d="M6.5 21.3 H12.7 M8.6 21.3 V8.4 Q8.6 6.6 10.4 6.6 H14 Q15.5 6.6 15.5 8.2 V11.5 M15.5 7.4 H18 Q19.3 7.4 19.3 8.8 V11" stroke="#0c3a8c" stroke-width="1.3"/><circle cx="13.1" cy="13.6" r="0.5" fill="#0c3a8c"/><path d="M21.30 18.30 L21.30 18.35 L21.30 18.40 L21.30 18.46 L21.30 18.51 L21.30 18.56 L21.32 18.62 L21.36 18.68 L21.47 18.76 L21.68 18.87 L22.00 19.02 L22.32 19.20 L22.52 19.35 L22.60 19.47 L22.62 19.58 L22.61 19.67 L22.58 19.76 L22.55 19.85 L22.51 19.93 L22.46 20.02 L22.42 20.10 L22.37 20.18 L22.32 20.26 L22.26 20.34 L22.21 20.41 L22.14 20.48 L22.07 20.54 L21.97 20.58 L21.82 20.57 L21.59 20.47 L21.28 20.28 L20.99 20.08 L20.78 19.95 L20.66 19.89 L20.59 19.89 L20.53 19.90 L20.48 19.92 L20.43 19.95 L20.39 19.98 L20.35 20.01 L20.30 20.03 L20.25 20.06 L20.21 20.08 L20.16 20.11 L20.12 20.13 L20.07 20.17 L20.03 20.21 L20.00 20.27 L19.98 20.41 L20.00 20.65 L20.02 21.00 L20.04 21.36 L20.00 21.61 L19.94 21.75 L19.86 21.81 L19.77 21.85 L19.68 21.87 L19.58 21.89 L19.49 21.89 L19.39 21.90 L19.30 21.90 L19.21 21.90 L19.11 21.89 L19.02 21.89 L18.92 21.87 L18.83 21.85 L18.74 21.81 L18.66 21.75 L18.60 21.61 L18.56 21.36 L18.58 21.00 L18.60 20.65 L18.62 20.41 L18.60 20.27 L18.57 20.21 L18.53 20.17 L18.48 20.13 L18.44 20.11 L18.39 20.08 L18.35 20.06 L18.30 20.03 L18.25 20.01 L18.21 19.98 L18.17 19.95 L18.12 19.92 L18.07 19.90 L18.01 19.89 L17.94 19.89 L17.82 19.95 L17.61 20.08 L17.32 20.28 L17.01 20.47 L16.78 20.57 L16.63 20.58 L16.53 20.54 L16.46 20.48 L16.39 20.41 L16.34 20.34 L16.28 20.26 L16.23 20.18 L16.18 20.10 L16.14 20.02 L16.09 19.93 L16.05 19.85 L16.02 19.76 L15.99 19.67 L15.98 19.58 L16.00 19.47 L16.08 19.35 L16.28 19.20 L16.60 19.02 L16.92 18.87 L17.13 18.76 L17.24 18.68 L17.28 18.62 L17.30 18.56 L17.30 18.51 L17.30 18.46 L17.30 18.40 L17.30 18.35 L17.30 18.30 L17.30 18.25 L17.30 18.20 L17.30 18.14 L17.30 18.09 L17.30 18.04 L17.28 17.98 L17.24 17.92 L17.13 17.84 L16.92 17.73 L16.60 17.58 L16.28 17.40 L16.08 17.25 L16.00 17.13 L15.98 17.02 L15.99 16.93 L16.02 16.84 L16.05 16.75 L16.09 16.67 L16.14 16.58 L16.18 16.50 L16.23 16.42 L16.28 16.34 L16.34 16.26 L16.39 16.19 L16.46 16.12 L16.53 16.06 L16.63 16.02 L16.78 16.03 L17.01 16.13 L17.32 16.32 L17.61 16.52 L17.82 16.65 L17.94 16.71 L18.01 16.71 L18.07 16.70 L18.12 16.68 L18.17 16.65 L18.21 16.62 L18.25 16.59 L18.30 16.57 L18.35 16.54 L18.39 16.52 L18.44 16.49 L18.48 16.47 L18.53 16.43 L18.57 16.39 L18.60 16.33 L18.62 16.19 L18.60 15.95 L18.58 15.60 L18.56 15.24 L18.60 14.99 L18.66 14.85 L18.74 14.79 L18.83 14.75 L18.92 14.73 L19.02 14.71 L19.11 14.71 L19.21 14.70 L19.30 14.70 L19.39 14.70 L19.49 14.71 L19.58 14.71 L19.68 14.73 L19.77 14.75 L19.86 14.79 L19.94 14.85 L20.00 14.99 L20.04 15.24 L20.02 15.60 L20.00 15.95 L19.98 16.19 L20.00 16.33 L20.03 16.39 L20.07 16.43 L20.12 16.47 L20.16 16.49 L20.21 16.52 L20.25 16.54 L20.30 16.57 L20.35 16.59 L20.39 16.62 L20.43 16.65 L20.48 16.68 L20.53 16.70 L20.59 16.71 L20.66 16.71 L20.78 16.65 L20.99 16.52 L21.28 16.32 L21.59 16.13 L21.82 16.03 L21.97 16.02 L22.07 16.06 L22.14 16.12 L22.21 16.19 L22.26 16.26 L22.32 16.34 L22.37 16.42 L22.42 16.50 L22.46 16.58 L22.51 16.67 L22.55 16.75 L22.58 16.84 L22.61 16.93 L22.62 17.02 L22.60 17.13 L22.52 17.25 L22.32 17.40 L22.00 17.58 L21.68 17.73 L21.47 17.84 L21.36 17.92 L21.32 17.98 L21.30 18.04 L21.30 18.09 L21.30 18.14 L21.30 18.20 L21.30 18.25 Z" stroke="#0c3a8c" stroke-width="1.4"/><circle cx="19.3" cy="18.3" r="0.9" fill="#e8ecf7"/></g>
<g transform="translate(17.10,616.00)" ><circle cx="14.5" cy="14.3" r="7.5" stroke="#0c3a8c" stroke-width="1.3"/><path d="M12.3 12.4 Q12.4 10.4 14.4 10.4 Q16.6 10.4 16.6 12.4 Q16.5 13.4 15.4 14.4 Q14.4 15.2 14.4 16" stroke="#0c3a8c" stroke-width="1.3"/><circle cx="14.45" cy="18.2" r="0.4" fill="#0c3a8c" stroke="#0c3a8c" stroke-width="1.3"/></g>
<g transform="translate(288.80,254.70)" ><path d="M20.8 32 H14.4 Q10.6 32 10.6 28.2 V18.4 Q10.6 14.6 14.4 14.6 H27.6 Q31.4 14.6 31.4 18.4 V21.4" stroke="#0c3a8c" stroke-width="1.75"/><path d="M16.4 14.6 Q16.8 10.8 19.6 10.8 H23 Q25.8 10.8 26.4 14.6" stroke="#0c3a8c" stroke-width="1.75"/><circle cx="27.3" cy="27.5" r="5" stroke="#0c3a8c" stroke-width="1.75"/><path d="M26.8 25.6 V27.8 L28.6 29.2" stroke="#0c3a8c" stroke-width="1.75"/></g>
<g transform="translate(572.60,254.70)" ><path d="M27.4 12.4 A10.6 10.6 0 1 0 32.6 22.4" stroke="#0a8a14" stroke-width="1.75"/><path d="M18.4 21 L22.5 25.3 L32.6 14.6" stroke="#0a8a14" stroke-width="1.75"/></g>
<g transform="translate(856.40,254.70)" ><rect x="11.6" y="11.2" width="21.2" height="21.2" rx="4.6" stroke="#f7a600" stroke-width="1.75"/><path d="M22 16.4 V23.6" stroke="#f7a600" stroke-width="1.9"/><circle cx="22" cy="27" r="1" fill="#f7a600"/></g>
<g transform="translate(1140.20,254.70)" ><path d="M11.2 17.4 L21.8 12 L32.4 17.4" stroke="#1772f5" stroke-width="1.75"/><path d="M13.4 20.6 V29.6 Q13.4 31.6 15.4 31.6 H28.2 Q30.2 31.6 30.2 29.6 V20.6" stroke="#1772f5" stroke-width="1.75"/><path d="M18.6 19.6 Q21.8 18.4 25.2 19.6 Q25 23.4 21.9 25.6 Q18.8 23.4 18.6 19.6 Z" stroke="#1772f5" stroke-width="1.75"/></g>
<g transform="translate(1424.00,254.70)" ><rect x="12.6" y="12.8" width="19.2" height="18.4" rx="1.8" stroke="#9b2ff5" stroke-width="1.6"/><rect x="12.6" y="12.8" width="19.2" height="4.8" fill="#a23ef7"/><path d="M17.1 11 V15 M26.5 11 V15" stroke="#b6d2a0" stroke-width="1.5"/><path d="M22 20.2 V25" stroke="#9b2ff5" stroke-width="1.7"/><circle cx="22" cy="27.6" r="0.9" fill="#9b2ff5"/></g>
<g transform="translate(1707.80,254.70)" ><path d="M32.6 18.8 V16.2 Q32.6 11.2 27.6 11.2 H16 Q11 11.2 11 16.2 V27.8 Q11 32.8 16 32.8 H27.6 Q32.6 32.8 32.6 27.8 V21.4" stroke="#ff0a0a" stroke-width="1.7"/><path d="M18.6 19 L25 25.4 M25 19 L18.6 25.4" stroke="#ff0a0a" stroke-width="1.8"/></g>
<path d="M1659.60 452.10 A5.4 5.4 0 1 0 1655.80 456.20" stroke="#555" stroke-width="1.2"/><path d="M1654.40 448.30 V450.90 L1656.60 452.90" stroke="#555" stroke-width="1.2"/><path d="M1657.60 453.50 L1660.00 455.10 L1657.60 456.70" stroke="#555" stroke-width="1.1"/>
<path d="M1656.60 531.20 A5.4 5.4 0 1 0 1652.80 535.30" stroke="#555" stroke-width="1.2"/><path d="M1651.40 527.40 V530.00 L1653.60 532.00" stroke="#555" stroke-width="1.2"/><path d="M1654.60 532.60 L1657.00 534.20 L1654.60 535.80" stroke="#555" stroke-width="1.1"/>
<path d="M1654.80 610.30 A5.4 5.4 0 1 0 1651.00 614.40" stroke="#555" stroke-width="1.2"/><path d="M1649.60 606.50 V609.10 L1651.80 611.10" stroke="#555" stroke-width="1.2"/><path d="M1652.80 611.70 L1655.20 613.30 L1652.80 614.90" stroke="#555" stroke-width="1.1"/>
<path d="M1656.60 689.40 A5.4 5.4 0 1 0 1652.80 693.50" stroke="#555" stroke-width="1.2"/><path d="M1651.40 685.60 V688.20 L1653.60 690.20" stroke="#555" stroke-width="1.2"/><path d="M1654.60 690.80 L1657.00 692.40 L1654.60 694.00" stroke="#555" stroke-width="1.1"/>
<defs><clipPath id="ph1"><circle cx="1273.7" cy="609.4" r="22"/></clipPath><clipPath id="ph2"><circle cx="1273.5" cy="688" r="22"/></clipPath><filter id="bl" x="-30%" y="-30%" width="160%" height="160%"><feGaussianBlur stdDeviation="1.1"/></filter></defs>
<g clip-path="url(#ph1)"><rect x="1250" y="586" width="48" height="48" fill="#c9b27e"/><g filter="url(#bl)"><ellipse cx="1276" cy="589" rx="10" ry="4" fill="#92b4dc"/><ellipse cx="1286" cy="597" rx="8" ry="5" fill="#7e9a56"/><ellipse cx="1293" cy="606" rx="3" ry="8" fill="#9a8a60"/><ellipse cx="1262" cy="597" rx="9" ry="5" fill="#d8c490"/><path d="M1253 612 Q1254 596 1266 594 Q1274 594 1272 602 L1268 616 Z" fill="#3e2a2c"/><ellipse cx="1255" cy="606" rx="3" ry="8" fill="#c65a3e"/><ellipse cx="1269" cy="605" rx="3" ry="4" fill="#c4927a"/><ellipse cx="1270" cy="616" rx="6" ry="5" fill="#cfa6bc"/><path d="M1250 634 L1252 616 Q1258 610 1266 618 L1278 624 L1276 634 Z" fill="#8e1832"/><ellipse cx="1283" cy="619" rx="10" ry="11" fill="#f3f0ec"/><ellipse cx="1279" cy="607" rx="5" ry="4" fill="#eee6de"/><ellipse cx="1284" cy="606" rx="2.5" ry="2.5" fill="#d8b490"/><path d="M1280 617.5 L1290 612.5" stroke="#e02028" stroke-width="1.8"/><ellipse cx="1274" cy="630" rx="6" ry="3" fill="#2c2c3a"/></g></g>
<g clip-path="url(#ph2)"><rect x="1250" y="664" width="48" height="48" fill="#b9d3e6"/><g filter="url(#bl)"><path d="M1250 712 L1251 684 Q1254 666 1272 665 Q1290 666 1294 684 L1296 700 L1280 712 Z" fill="#19191e"/><path d="M1262 674 Q1268 666 1280 668 Q1286 674 1284 686 Q1280 696 1270 697 Q1262 694 1261 684 Z" fill="#d6a58e"/><ellipse cx="1271" cy="676.5" rx="2.2" ry="0.9" fill="#3a2422"/><ellipse cx="1281" cy="680.5" rx="2" ry="0.9" fill="#3a2422"/><ellipse cx="1271.5" cy="688.5" rx="3" ry="1.4" fill="#c46a72"/><path d="M1258 712 L1262 696 L1274 700 L1272 712 Z" fill="#dcb49c"/><path d="M1272 712 L1280 696 L1296 694 L1296 712 Z" fill="#eec5c6"/></g></g>
<defs><clipPath id="gclip"><rect x="800" y="380" width="260" height="128.2"/></clipPath></defs>
<g clip-path="url(#gclip)"><path d="M834.60 513.00 A98 98 0 0 1 1005.02 446.98 L973.25 475.95 A55 55 0 0 0 877.60 513.00 Z" fill="#029a02" stroke="#fff" stroke-width="2"/><path d="M1005.02 446.98 A98 98 0 0 1 1030.18 503.96 L987.37 507.93 A55 55 0 0 0 973.25 475.95 Z" fill="#ffae00" stroke="#fff" stroke-width="2"/><path d="M1030.18 503.96 A98 98 0 0 1 1030.60 513.00 L987.60 513.00 A55 55 0 0 0 987.37 507.93 Z" fill="#a044f5" stroke="#fff" stroke-width="2"/></g>
<defs><clipPath id="dclip"><rect x="1220" y="845" width="549" height="181.5"/></clipPath></defs>
<g clip-path="url(#dclip)"><path d="M1439.25 951.90 A109 109 0 0 1 1464.39 954.84 L1453.32 1001.54 A61 61 0 0 0 1439.25 999.90 Z" fill="#00bfef" stroke="#fff" stroke-width="1.5"/><path d="M1464.39 954.84 A109 109 0 1 1 1439.23 951.90 L1439.24 999.90 A61 61 0 1 0 1453.32 1001.54 Z" fill="#2f74fb" stroke="#fff" stroke-width="1.5"/></g>
<text x="1448.8" y="981" font-size="13" fill="#fff" text-anchor="middle" font-family="Liberation Sans">1</text>
<path d="M444.5 979 H450.5 V1026.5" stroke="#1b1f4e" stroke-width="1.2" stroke-linecap="butt" stroke-linejoin="miter"/>
<path d="M451 1026.5 V1013 Q451 1009 455 1009 H763.6 Q767.6 1009 767.6 1013 V1026.5 Z" fill="#3d4ff7"/>
<path d="M1723.4 372.8 H1733.8 L1728.6 379 Z" fill="#666"/>
<path d="M1159.4 877.7 H1170 L1164.7 883.5 Z" fill="#666"/>
</svg>
</body></html>
